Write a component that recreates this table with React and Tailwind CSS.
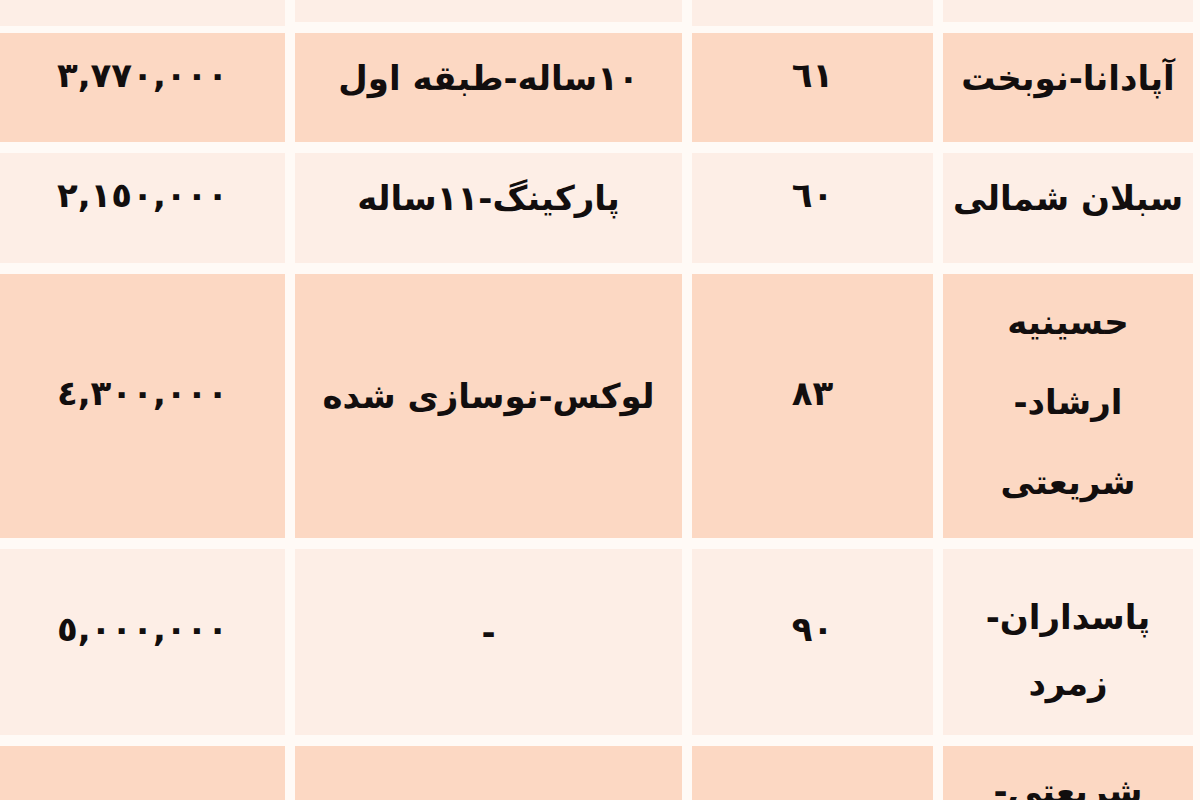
var ROWS = [
  { tone: 'light', place: [''], area: '', note: '', price: '' },
  { tone: 'peach', place: ['آپادانا-نوبخت'], area: '٦١', note: '١٠ساله-طبقه اول', price: '٣,٧٧٠,٠٠٠' },
  { tone: 'light', place: ['سبلان شمالی'], area: '٦٠', note: 'پارکینگ-١١ساله', price: '٢,١٥٠,٠٠٠' },
  { tone: 'peach', place: ['حسینیه', 'ارشاد-', 'شریعتی'], area: '٨٣', note: 'لوکس-نوسازی شده', price: '٤,٣٠٠,٠٠٠', placePad: 'pb-[8px]', lead: 'leading-[80px]' },
  { tone: 'light', place: ['پاسداران-', 'زمرد'], area: '٩٠', note: '-', price: '٥,٠٠٠,٠٠٠', placePad: 'pt-[16px]', lead: 'leading-[66px]' },
  { tone: 'peach', place: ['شریعتی-', 'ونک'], area: '', note: '', price: '', placePad: 'pt-[12px]', lead: 'leading-[66px]', top: true }
]

function Cell(props) {
  var bg = props.tone === 'peach' ? 'bg-[#fcd8c3]' : 'bg-[#fdeee6]'
  var align = props.top ? ' justify-start' : ' justify-center'
  return (
    <div className={'flex flex-col items-center text-center text-[#120e0e] ' + bg + align + ' ' + props.pad}>
      {props.children}
    </div>
  )
}

export default function App() {
  return (
    <div
      dir="rtl"
      className="w-[1200px] h-[800px] overflow-hidden bg-[#fffaf6] pr-[7px]"
      style={{ fontFamily: '"DejaVu Sans", "Noto Sans", sans-serif' }}
    >
      <div className="grid grid-cols-[250px_241px_387px_285px] grid-rows-[22px_109px_110px_264px_186px_140px] gap-x-[10px] gap-y-[11px] font-bold text-[34px]">
        {ROWS.map(function (row, i) {
          return [
            <Cell key={'p' + i} tone={row.tone} top={row.top} pad={row.placePad || 'pb-[20px]'}>
              {row.place.map(function (line, j) {
                return (
                  <div key={j} className={(row.lead || 'leading-[78px]') + ' whitespace-nowrap'}>{line}</div>
                )
              })}
            </Cell>,
            <Cell key={'a' + i} tone={row.tone} pad="pb-[26px]">
              <div className="leading-none">{row.area}</div>
            </Cell>,
            <Cell key={'n' + i} tone={row.tone} pad="pb-[20px]">
              <div className="leading-none whitespace-nowrap">{row.note}</div>
            </Cell>,
            <Cell key={'c' + i} tone={row.tone} pad="pb-[26px]">
              <div className="leading-none tracking-[7px]" dir="ltr">{row.price}</div>
            </Cell>
          ]
        })}
      </div>
    </div>
  )
}
